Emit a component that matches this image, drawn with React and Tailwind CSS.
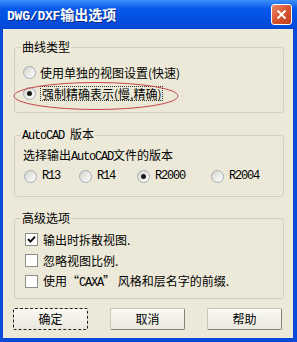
import React from 'react';

const cjk = "font-['Noto_Sans_CJK_SC',sans-serif]";
const mono = "font-['Liberation_Mono',monospace] tracking-[-1.2px]";

// radio redondo estilo XP
const Radio = ({ checked }) => (
  <span className="w-[13px] h-[13px] shrink-0 rounded-full border border-[#A3ABB5] bg-linear-to-br from-[#D6D6CE] to-white flex items-center justify-center">
    {checked && <span className="w-[5px] h-[5px] rounded-full bg-[#1A1A1A]" />}
  </span>
);

const Check = ({ checked }) => (
  <span className="w-[13px] h-[13px] shrink-0 border border-[#8E8E88] bg-white flex items-center justify-center">
    {checked && (
      <svg width="9" height="9" viewBox="0 0 9 9">
        <path d="M1 4 L3.5 6.6 L8 1.6" stroke="#111" strokeWidth="2" fill="none" />
      </svg>
    )}
  </span>
);

const Group = ({ title, className, children }) => (
  <fieldset className={`border border-[#D0D0BF] rounded-[3px] pl-[6px] pr-[6px] ${className}`}>
    <legend className="px-[1px] leading-[14px] text-[12px]">{title}</legend>
    {children}
  </fieldset>
);

const Btn = ({ children, focus }) => (
  <button
    className={`w-[75px] h-[22px] rounded-[2px] text-[12px] leading-none flex items-center justify-center bg-linear-to-b from-[#FAF9F4] to-[#EAE8DE] ${
      focus
        ? 'border border-dashed border-[#222]'
        : 'border border-[#C9C6B8] border-r-[#84827A] border-b-[#84827A]'
    }`}
  >
    {children}
  </button>
);

export default function App() {
  return (
    <div className={`w-[297px] h-[342px] bg-[#0A48D8] flex flex-col text-black ${cjk}`}>
      {/* barra de titulo */}
      <div className="h-[29px] shrink-0 flex items-center justify-between pl-[7px] pr-[5px] bg-linear-to-b from-[#3E8EF8] via-[#0558EA] via-30% to-[#0348D6]">
        <span className="text-white font-bold text-[14px] leading-none [text-shadow:1px_1px_0_#0A2A8A]">
          <span className="font-['Liberation_Mono',monospace] text-[13px] tracking-[-0.2px]">DWG/DXF</span>输出选项
        </span>
        <span className="w-[21px] h-[21px] rounded-[3px] border border-white bg-linear-to-br from-[#E88A6C] via-[#D9532E] to-[#C2401E] flex items-center justify-center">
          <svg width="11" height="11" viewBox="0 0 11 11">
            <path d="M1.5 1.5 L9.5 9.5 M9.5 1.5 L1.5 9.5" stroke="white" strokeWidth="2" />
          </svg>
        </span>
      </div>

      {/* cuerpo */}
      <div className="flex-1 ml-[3px] mr-[4px] mb-[4px] bg-[#ECE9D8] pl-[11px] pr-[9px] pt-[11px] flex flex-col">
        <Group title="曲线类型" className="h-[73px] pt-[8px]">
          <div className="ml-[2px] h-[21px] flex items-center gap-[4px] text-[12px]">
            <Radio />
            <span>使用单独的视图设置(快速)</span>
          </div>
          <div className="relative ml-[2px] h-[21px] flex items-center gap-[4px] text-[12px]">
            <Radio checked />
            <span className="border border-dotted border-[#333] px-[1px] leading-[13px]">强制精确表示(慢,精确)</span>
            <svg className="absolute left-[-10px] top-[-2px]" width="166" height="30" viewBox="0 0 166 30">
              <ellipse cx="83" cy="15" rx="82" ry="13.5" fill="none" stroke="#C9454A" strokeWidth="1" />
            </svg>
          </div>
        </Group>

        <Group
          title={<><span className={mono}>AutoCAD </span>版本</>}
          className="h-[70px] mt-[14px] pt-[5px]"
        >
          <div className="ml-[2px] h-[14px] leading-[14px] text-[12px]">
            选择输出<span className={mono}>AutoCAD</span>文件的版本
          </div>
          <div className="ml-[3px] mt-[4px] h-[20px] flex items-center text-[12px]">
            {[
              ['R13', 'w-[55px]', false],
              ['R14', 'w-[58px]', false],
              ['R2000', 'w-[74px]', true],
              ['R2004', 'w-[60px]', false],
            ].map(([label, w, on]) => (
              <div key={label} className={`${w} flex items-center gap-[5px]`}>
                <Radio checked={on} />
                <span className={mono}>{label}</span>
              </div>
            ))}
          </div>
        </Group>

        <Group title="高级选项" className="h-[88px] mt-[14px] pt-[4px]">
          <div className="ml-[4px] h-[21px] flex items-center gap-[5px] text-[12px]">
            <Check checked />
            <span>输出时拆散视图.</span>
          </div>
          <div className="ml-[4px] h-[21px] flex items-center gap-[5px] text-[12px]">
            <Check />
            <span>忽略视图比例.</span>
          </div>
          <div className="ml-[4px] h-[21px] flex items-center gap-[5px] text-[12px]">
            <Check />
            <span>
              使用“<span className={mono}>CAXA</span>” 风格和层名字的前缀.
            </span>
          </div>
        </Group>

        <div className="mt-[9px] -ml-[1px] flex gap-[22px]">
          <Btn focus>确定</Btn>
          <Btn>取消</Btn>
          <Btn>帮助</Btn>
        </div>
      </div>
    </div>
  );
}
